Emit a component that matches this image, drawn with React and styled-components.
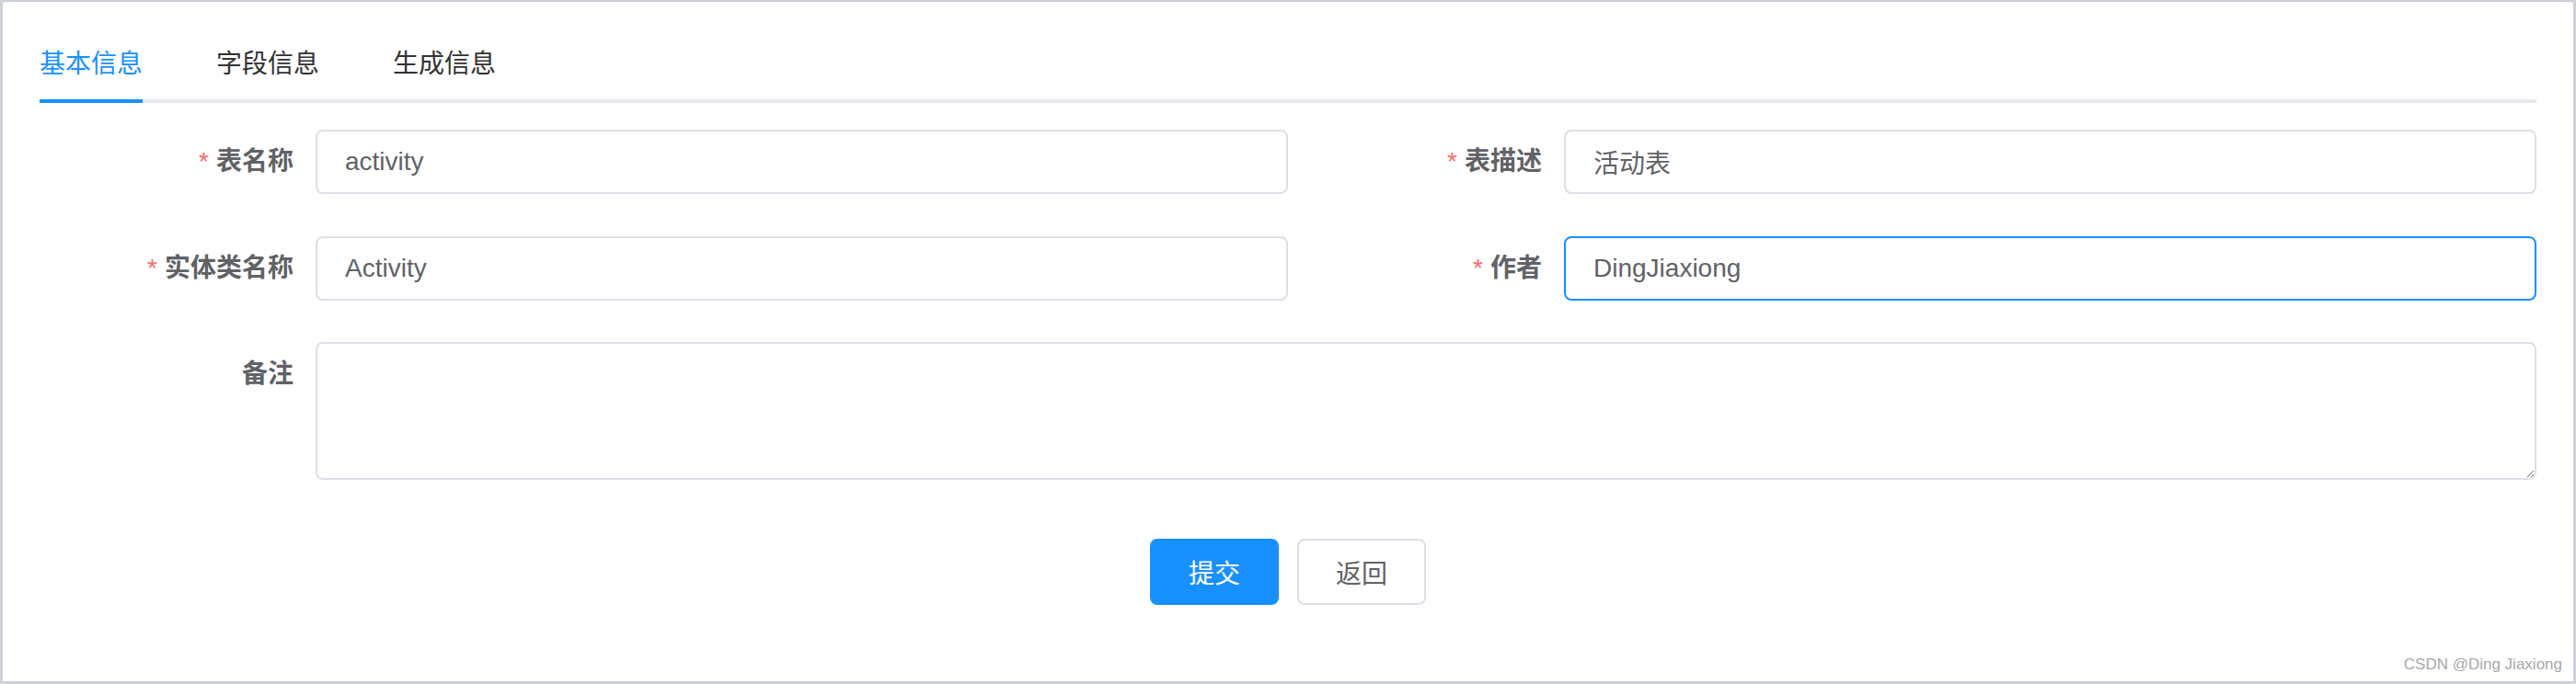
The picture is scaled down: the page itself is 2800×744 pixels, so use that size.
import React from "react";
import styled, { createGlobalStyle } from "styled-components";

const GlobalStyle = createGlobalStyle`
  html, body {
    margin: 0;
    padding: 0;
    background: #d4d8e0;
  }
  * {
    box-sizing: border-box;
  }
`;

const fontStack = `"Liberation Sans", "Noto Sans CJK SC", sans-serif`;

const Card = styled.div`
  position: relative;
  margin: 2px 3px 3px 3px;
  height: 739px;
  padding: 30px 40px 0 40px;
  background: #fff;
  box-shadow: 0 0 6px rgba(0, 0, 0, 0.12);
  font-family: ${fontStack};
`;

const TabHeader = styled.div`
  display: flex;
  height: 80px;
  border-bottom: 4px solid #e4e7ed;
  margin-bottom: 29px;
`;

const Tab = styled.div`
  position: relative;
  padding: 0 40px;
  line-height: 76px;
  font-size: 28px;
  color: ${(p) => (p.$active ? "#1890ff" : "#303133")};
  &:first-child {
    padding-left: 0;
  }
  ${(p) =>
    p.$active &&
    `
    &::after {
      content: "";
      position: absolute;
      left: 0;
      right: 40px;
      bottom: -4px;
      height: 4px;
      background: #1890ff;
    }
  `}
`;

const Row = styled.div`
  display: grid;
  grid-template-columns: 1fr 1fr;
  margin-bottom: ${(p) => p.$gap || 46}px;
`;

const Item = styled.div`
  display: flex;
  align-items: flex-start;
`;

const Label = styled.label`
  width: 300px;
  flex: none;
  padding-right: 24px;
  text-align: right;
  line-height: 70px;
  font-size: 28px;
  font-weight: 700;
  color: #606266;
`;

const Star = styled.span`
  color: #f56c6c;
  margin-right: 8px;
  font-weight: 400;
`;

const Input = styled.input`
  flex: 1;
  min-width: 0;
  height: 70px;
  padding: 0 30px;
  border: 2px solid ${(p) => (p.$focused ? "#1890ff" : "#dcdfe6")};
  border-radius: 8px;
  font-family: ${fontStack};
  font-size: 28px;
  color: #606266;
  background: #fff;
  outline: none;
`;

const TextArea = styled.textarea`
  flex: 1;
  height: 150px;
  padding: 10px 30px;
  border: 2px solid #dcdfe6;
  border-radius: 8px;
  font-family: ${fontStack};
  font-size: 28px;
  color: #606266;
  resize: vertical;
  outline: none;
`;

const Actions = styled.div`
  display: flex;
  justify-content: center;
  gap: 20px;
  margin-top: 64px;
`;

const Button = styled.button`
  width: 140px;
  height: 72px;
  border-radius: 8px;
  font-family: ${fontStack};
  font-size: 28px;
  cursor: pointer;
  border: 2px solid ${(p) => (p.$primary ? "#1890ff" : "#dcdfe6")};
  background: ${(p) => (p.$primary ? "#1890ff" : "#fff")};
  color: ${(p) => (p.$primary ? "#fff" : "#606266")};
`;

const Watermark = styled.div`
  position: absolute;
  right: 12px;
  bottom: 8px;
  font-family: "Liberation Sans", sans-serif;
  font-size: 17px;
  color: #a8a8a8;
`;

const Field = ({ label, required, value, focused }) => (
  <Item>
    <Label>
      {required && <Star>*</Star>}
      {label}
    </Label>
    <Input defaultValue={value} $focused={focused} />
  </Item>
);

const App = () => {
  return (
    <>
      <GlobalStyle />
      <Card>
        <TabHeader>
          <Tab $active>基本信息</Tab>
          <Tab>字段信息</Tab>
          <Tab>生成信息</Tab>
        </TabHeader>
        <Row>
          <Field label="表名称" required value="activity" />
          <Field label="表描述" required value="活动表" />
        </Row>
        <Row $gap={45}>
          <Field label="实体类名称" required value="Activity" />
          <Field label="作者" required value="DingJiaxiong" focused />
        </Row>
        <Item>
          <Label>备注</Label>
          <TextArea />
        </Item>
        <Actions>
          <Button $primary>提交</Button>
          <Button>返回</Button>
        </Actions>
        <Watermark>CSDN @Ding Jiaxiong</Watermark>
      </Card>
    </>
  );
};

export default App;
